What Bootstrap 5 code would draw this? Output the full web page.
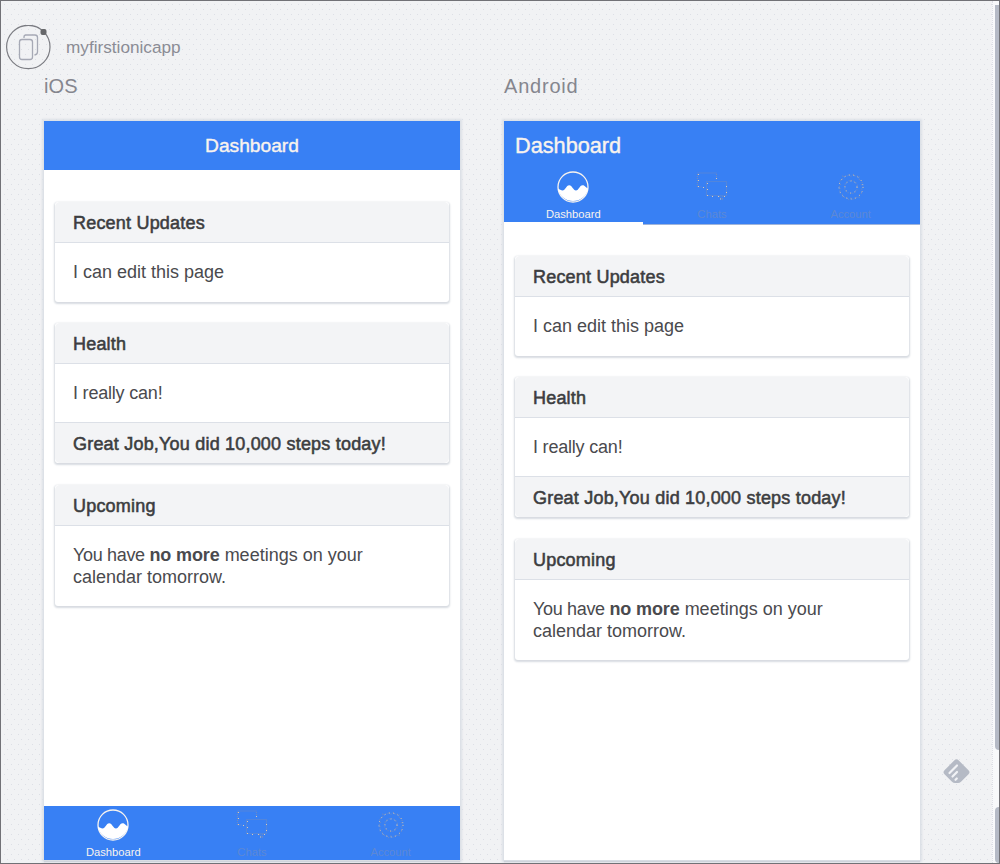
<!DOCTYPE html>
<html lang="en">
<head>
<meta charset="utf-8">
<meta name="viewport" content="width=device-width, initial-scale=1">
<title>myfirstionicapp</title>
<link href="https://cdn.jsdelivr.net/npm/bootstrap@5.3.0/dist/css/bootstrap.min.css" rel="stylesheet">
<style>
:root{--blue:#3880f4;--edge:#dce0e7}
body{height:864px;overflow:hidden;font-family:"Liberation Sans",Arial,sans-serif;color:#444;font-size:18px;line-height:22px;border:1px solid #717176;
 background:radial-gradient(circle at .5px .5px,#dddfe6 .6px,transparent .8px) 4px 4px/7px 10px,radial-gradient(circle at .5px .5px,#dddfe6 .6px,transparent .8px) 7px 9px/7px 10px,#f1f2f4}
.top-bar{height:70px;padding:24px 0 0 5px}
.app-name{font-size:17.2px;color:#8b8c95;margin-left:14px;line-height:44px}
.platforms{padding-left:43px;gap:44px}
.platform-name{font-size:20px;line-height:30px;height:50px;color:#85868e;letter-spacing:.1px}
.platform-name.wide{letter-spacing:.8px}
.phone{width:416px;height:739px;box-shadow:0 0 2px 2px var(--edge),0 2px 1px #b3b7c2}
.bar,.tab-strip{background:var(--blue);color:#f8f3ee}
.bar{height:49px;font-size:19.2px;-webkit-text-stroke:.4px}
.bar.android{height:50px;font-size:21.7px;padding-left:11px}
.feed{padding:32px 11px 0;gap:21.3px}
.panel{border:0;border-radius:3px;box-shadow:0 1px 2px 1px #d7dbe1;--bs-card-cap-bg:transparent;overflow:hidden;background:#fff}
.panel .card-header,.panel .card-footer{height:41px;padding:10px 18px 8px;border-color:var(--edge);color:#3c3d40;-webkit-text-stroke:.55px;letter-spacing:.2px;background:#f3f4f6}
.panel .card-body{padding:18.25px 18px;color:#4a4a4e}
.tight{letter-spacing:-.2px}
.lead-in{letter-spacing:-.33px}
.panel strong{letter-spacing:-.12px}
.tab-strip{height:54px;font-size:11.2px;line-height:13px}
.tab-item{padding-top:3px}
.tab-item svg{display:block;margin:0 auto 5px}
.tab-item.off{color:#5c88d4}
.tab-strip.android{height:53px}
.tab-strip.android .tab-item{padding-top:0}
.tab-strip.android .tab-item.selected-line{border-bottom:2px solid #fff}
.tab-strip.android .tab-item.off{box-shadow:0 1px #9fb4da}
.scroll-thumb{width:4px;background:#b5bac6;right:0}
.thumb-a{top:4px;height:745px;border-radius:0 0 0 4px}
.thumb-b{top:806px;bottom:0;border-radius:4px 0 0 4px}
.scroll-gap{right:0;width:7px;top:0;bottom:0;background:#f8f9fb;border-left:1px dotted #dddfe6}
.feedly{right:29px;top:758px}
</style>
</head>
<body class="position-relative">
<svg width="0" height="0" class="position-absolute">
 <defs>
  <symbol id="wave" viewBox="0 0 32 32"><circle cx="16" cy="16" r="15" fill="none" stroke="#f8f3ee" stroke-width="1.3"/><path fill="#fff" d="M.8 17.500c2 .8 3.200 2 4.800 2 2.700 0 3.600-5.300 6.600-5.300s4 5.300 6.800 5.300 3.400-5.300 6.600-5.300c2.600 0 3.300 2.800 5.600 3.300A15.500 15.500 0 0 1 .8 17.500Z"/></symbol>
  <symbol id="chat" viewBox="0 0 32 32"><g fill="none" stroke="#6b89c4" stroke-width="1.2" stroke-dasharray="1 1"><path d="M20.500 8V2H1.500v14h4M10.500 10.500h20v14h-20ZM23.500 25l3 4v-4"/></g><g fill="none" stroke="#d6cabb" stroke-dasharray="1 5"><path d="M20.500 8V2M2.500 3v13.500h8M11.500 12v13.500h19V12M24 28h4"/></g></symbol>
  <symbol id="gear" viewBox="0 0 32 32"><g fill="none" stroke="#6b89c4" stroke-width="1.200" stroke-dasharray="1 1.500"><path d="m13.500 3.500 2.500 1.500 2.500-1.500 2 2 3.500-.5.500 3.500 3 1.500-1 3.500 1.500 2.500-1.500 2.500 1 3-3 2-.5 3-3.500-.2-2 2.200-2.500-1.500-2.500 1.500-2-2.200-3.500.2-.5-3-3-2 1-3L4 16l1.500-2.500-1-3.500 3-1.500.5-3.500 3.500.5Z"/><circle cx="16" cy="16" r="6.500"/></g><g fill="none" stroke="#dccdb8" stroke-dasharray="1 3.500"><circle cx="16" cy="16" r="12"/><circle cx="16" cy="16" r="6"/></g></symbol>
 </defs>
</svg>
<header class="top-bar d-flex">
 <svg width="46" height="46" viewBox="0 0 46 46" fill="none"><circle cx="22.300" cy="22" r="21.700" stroke="#7b7c82" stroke-width="1.200"/><rect x="13.500" y="14.500" width="13" height="20" rx="2.500" stroke="#a6a9b5" stroke-width="1.300"/><path d="M18 13v-1q0-2 2-2h9q2.500 0 2.500 2.500V27q0 2.500-3 3" stroke="#a6a9b5" stroke-width="1.300"/><rect x="34.500" y="4" width="6" height="6" rx="2" fill="#66676a"/></svg>
 <span class="app-name">myfirstionicapp</span>
</header>
<main class="platforms d-flex">
 <section>
  <div class="platform-name">iOS</div>
  <div class="phone bg-white d-flex flex-column">
   <div class="bar d-flex align-items-center justify-content-center">Dashboard</div>
   <div class="feed d-flex flex-column flex-grow-1">
    <article class="card panel"><div class="card-header">Recent Updates</div><div class="card-body">I can edit this page</div></article>
    <article class="card panel"><div class="card-header">Health</div><div class="card-body tight">I really can!</div><div class="card-footer">Great Job,You did 10,000 steps today!</div></article>
    <article class="card panel"><div class="card-header">Upcoming</div><div class="card-body"><span class="lead-in">You have </span><strong>no more</strong> meetings on your calendar tomorrow.</div></article>
   </div>
   <nav class="tab-strip d-flex text-center">
    <div class="tab-item col-4"><svg width="32" height="32"><use href="#wave"/></svg>Dashboard</div>
    <div class="tab-item col-4 off"><svg width="32" height="32"><use href="#chat"/></svg>Chats</div>
    <div class="tab-item col-4 off"><svg width="32" height="32"><use href="#gear"/></svg>Account</div>
   </nav>
  </div>
 </section>
 <section>
  <div class="platform-name wide">Android</div>
  <div class="phone bg-white d-flex flex-column">
   <div class="bar android d-flex align-items-center">Dashboard</div>
   <nav class="tab-strip android d-flex text-center">
    <div class="tab-item col-4 selected-line"><svg width="32" height="32"><use href="#wave"/></svg>Dashboard</div>
    <div class="tab-item col-4 off"><svg width="32" height="32"><use href="#chat"/></svg>Chats</div>
    <div class="tab-item col-4 off"><svg width="32" height="32"><use href="#gear"/></svg>Account</div>
   </nav>
   <div class="feed d-flex flex-column">
    <article class="card panel"><div class="card-header">Recent Updates</div><div class="card-body">I can edit this page</div></article>
    <article class="card panel"><div class="card-header">Health</div><div class="card-body tight">I really can!</div><div class="card-footer">Great Job,You did 10,000 steps today!</div></article>
    <article class="card panel"><div class="card-header">Upcoming</div><div class="card-body"><span class="lead-in">You have </span><strong>no more</strong> meetings on your calendar tomorrow.</div></article>
   </div>
  </div>
 </section>
</main>
<div class="scroll-gap position-absolute"></div>
<div class="scroll-thumb thumb-a position-absolute"></div>
<div class="scroll-thumb thumb-b position-absolute"></div>
<svg class="feedly position-absolute" width="27" height="25" viewBox="0 0 27 25"><path fill="#b5bac5" d="M11.200 1.500q2.300-2.300 4.600 0l9.700 9.700q2 2 0 4l-7.500 7.500q-1.300 1.300-3 1.300h-3q-1.700 0-3-1.300l-7.500-7.500q-2-2 0-4Z"/><path stroke="#f1f2f5" stroke-width="2.200" stroke-linecap="round" d="m6.500 14 7.500-7.500M9.500 17.500l4.500-4.500M12.500 20.800l1.300-1.300"/></svg>
<script src="https://cdn.jsdelivr.net/npm/bootstrap@5.3.0/dist/js/bootstrap.bundle.min.js"></script>
</body>
</html>
